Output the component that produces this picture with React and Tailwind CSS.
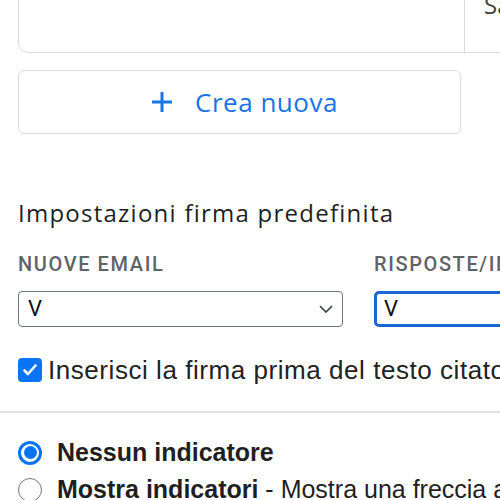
import React from 'react';

const Chevron = () => (
  <svg width="16" height="10" viewBox="0 0 16 10" fill="none" className="shrink-0">
    <path d="M2 2l6 6 6-6" stroke="#3c4043" strokeWidth="1.6" />
  </svg>
);

const SignatureSelect = ({ focused }) => (
  <div
    className={
      focused
        ? 'flex h-[36px] items-center rounded-[5px] border-[3px] border-[#1b66d4] pl-[7px] pr-[8px]'
        : 'flex h-[36px] items-center rounded-[4px] border border-[#70757a] pl-[9px] pr-[8px]'
    }
  >
    <span className="flex-1 text-[22px] leading-[22px] text-[#111]">V</span>
    <Chevron />
  </div>
);

const Radio = ({ checked }) =>
  checked ? (
    <div className="flex h-[24px] w-[24px] shrink-0 items-center justify-center rounded-full border-[3px] border-[#0a74f5]">
      <div className="h-[13px] w-[13px] rounded-full bg-[#0a74f5]" />
    </div>
  ) : (
    <div className="h-[24px] w-[24px] shrink-0 rounded-full border-[1.5px] border-[#737373]" />
  );

export default function App() {
  return (
    <div className="h-[500px] w-[500px] overflow-hidden bg-white font-['Roboto',sans-serif] text-[#202124]">
      <div className="w-[800px]">
        {/* signature card, top cut off */}
        <div className="-mt-[30px] ml-[18px] flex h-[83px] rounded-[10px] border border-[#dadce0]">
          <div className="w-[446px] border-r border-[#dadce0]" />
          <div className="pl-[19px] pt-[22px] font-['Open_Sans',sans-serif] text-[24px] leading-[24px] text-[#3c4043]">Salva</div>
        </div>

        <button className="ml-[18px] mt-[17px] flex h-[64px] w-[443px] items-center justify-center gap-[22px] rounded-[6px] border border-[#dadce0] bg-white pl-[10px]">
          <svg width="22" height="22" viewBox="0 0 22 22">
            <path d="M11 1v20M1 11h20" stroke="#1a73e8" strokeWidth="3" />
          </svg>
          <span className="font-['Open_Sans',sans-serif] text-[26px] font-medium leading-[26px] tracking-[0.5px] text-[#1a73e8]">Crea nuova</span>
        </button>

        <div className="ml-[18px] mt-[67px] font-['Open_Sans',sans-serif] text-[24px] leading-[24px] tracking-[1.25px] text-[#1f1f1f]">
          Impostazioni firma predefinita
        </div>

        <div className="ml-[18px] mt-[29px] grid w-[700px] grid-cols-[325px_1fr] gap-x-[31px]">
          <div className="text-[20px] font-medium leading-[20px] tracking-[0.08em] text-[#5f6368]">NUOVE EMAIL</div>
          <div className="text-[20px] font-medium leading-[20px] tracking-[0.08em] text-[#5f6368]">RISPOSTE/INOLTRI</div>
          <div className="mt-[17px]">
            <SignatureSelect />
          </div>
          <div className="mt-[17px]">
            <SignatureSelect focused />
          </div>
        </div>

        <div className="ml-[18px] mt-[30px] flex items-center gap-[6px]">
          <div className="flex h-[24px] w-[24px] items-center justify-center rounded-[4px] bg-[#0b74f4]">
            <svg width="18" height="18" viewBox="0 0 18 18" fill="none">
              <path d="M3.5 9.5l3.5 3.5 7.5-8.5" stroke="white" strokeWidth="2.6" strokeLinecap="round" strokeLinejoin="round" />
            </svg>
          </div>
          <span className="whitespace-nowrap font-['Liberation_Sans',sans-serif] text-[26px] leading-[26px] tracking-[0.55px] text-[#222]">
            Inserisci la firma prima del testo citato nelle risposte
          </span>
        </div>

        <div className="mt-[28px] h-[2px] w-[500px] bg-[#e3e3e3]" />

        <div className="ml-[18px] mt-[27px] flex flex-col gap-[12px] font-['Liberation_Sans',sans-serif]">
          <div className="flex items-center gap-[15px]">
            <Radio checked />
            <span className="text-[25px] font-bold leading-[25px] text-[#1f1f1f]">Nessun indicatore</span>
          </div>
          <div className="flex items-center gap-[15px] whitespace-nowrap">
            <Radio />
            <span className="text-[25px] leading-[25px] text-[#1f1f1f]">
              <b>Mostra indicatori</b> - Mostra una freccia accanto ai messaggi
            </span>
          </div>
        </div>
      </div>
    </div>
  );
}
